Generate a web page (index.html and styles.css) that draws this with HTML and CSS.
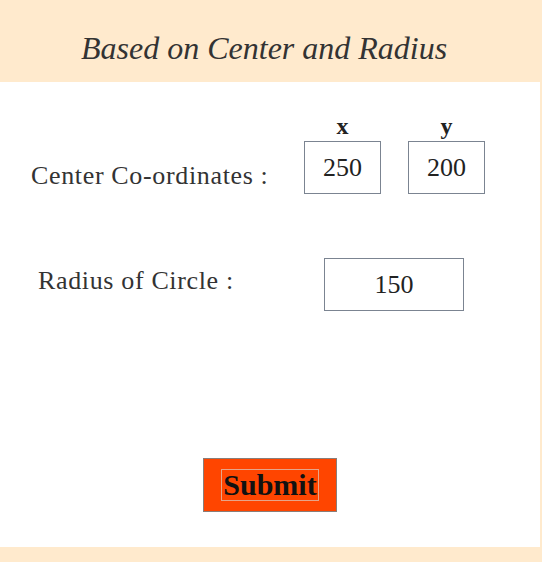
FILE: index.html
```html
<!DOCTYPE html>
<html>
<head>
<meta charset="utf-8">
<link rel="stylesheet" href="styles.css">
</head>
<body>
<header class="header">
  <h2 class="title">Based on Center and Radius</h2>
</header>
<main class="panel">
  <div class="row row-center">
    <span class="label label-center">Center Co-ordinates :</span>
    <div class="coords">
      <div class="coord">
        <span class="axis">x</span>
        <input class="box box-small" type="text" value="250">
      </div>
      <div class="coord">
        <span class="axis">y</span>
        <input class="box box-small" type="text" value="200">
      </div>
    </div>
  </div>
  <div class="row row-radius">
    <span class="label label-radius">Radius of Circle :</span>
    <input class="box box-wide" type="text" value="150">
  </div>
  <div class="actions">
    <button class="submit" type="button"><span class="submit-text">Submit</span></button>
  </div>
</main>
</body>
</html>
```
FILE: styles.css
```css
html, body {
  margin: 0;
  padding: 0;
}
body {
  background: #ffeacd;
  width: 542px;
  height: 562px;
  font-family: "Liberation Serif", "Times New Roman", serif;
  color: #333;
}
.header {
  height: 82px;
  display: flex;
  align-items: flex-start;
}
.title {
  margin: 0;
  padding: 30px 0 0 81px;
  font-size: 32px;
  font-style: italic;
  font-weight: normal;
  line-height: 36px;
  color: #333;
}
.panel {
  background: #fff;
  width: 540px;
  height: 465px;
  box-sizing: border-box;
  padding-top: 32px;
  display: flex;
  flex-direction: column;
}
.row {
  display: flex;
}
.row-center {
  align-items: flex-end;
}
.label {
  font-size: 26px;
  line-height: 30px;
  letter-spacing: 0.65px;
  color: #333;
  box-sizing: border-box;
}
.label-center {
  width: 304px;
  padding-left: 31px;
  margin-bottom: 3px;
}
.coords {
  display: flex;
  gap: 27px;
}
.coord {
  display: flex;
  flex-direction: column;
  align-items: center;
}
.axis {
  font-weight: bold;
  font-size: 24px;
  line-height: 24px;
  color: #222;
  margin-bottom: 3px;
}
.box {
  box-sizing: border-box;
  height: 53px;
  border: 1px solid #7b8491;
  border-radius: 0;
  padding: 0;
  margin: 0;
  background: #fff;
  font-family: "Liberation Serif", "Times New Roman", serif;
  font-size: 26px;
  color: #222;
  text-align: center;
  outline: none;
}
.box-small {
  width: 77px;
}
.box-wide {
  width: 140px;
}
.row-radius {
  margin-top: 64px;
  align-items: flex-start;
}
.label-radius {
  width: 324px;
  padding-left: 38px;
  margin-top: 8px;
}
.actions {
  margin-top: 147px;
  display: flex;
  justify-content: center;
}
.submit {
  box-sizing: border-box;
  width: 134px;
  height: 54px;
  background: #ff4500;
  border: 1px solid #8a7d78;
  border-radius: 0;
  padding: 0;
  display: flex;
  align-items: center;
  justify-content: center;
  font-family: "Liberation Serif", "Times New Roman", serif;
  font-weight: bold;
  font-size: 30px;
  color: #111;
}
.submit-text {
  border: 1px solid #e6a58a;
  padding: 0 1px;
  line-height: 30px;
}
```
